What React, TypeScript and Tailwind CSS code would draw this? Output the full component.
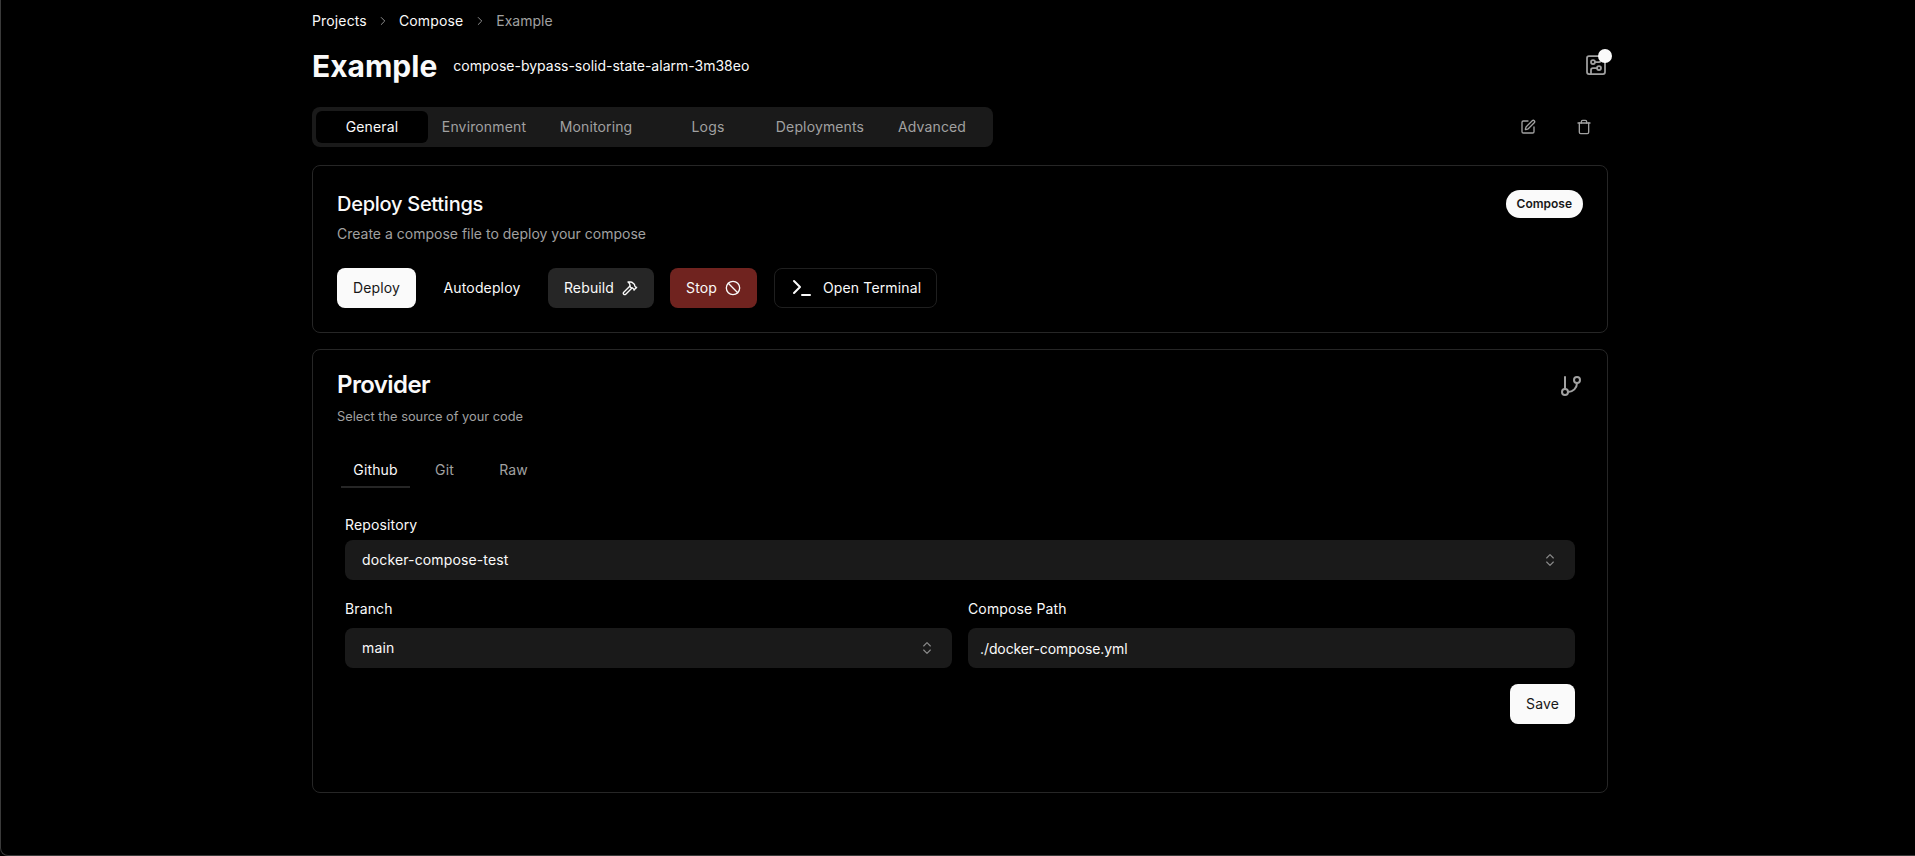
import { ChevronRight, CircuitBoard, SquarePen, Trash, Hammer, Ban, Terminal, ChevronsUpDown } from "lucide-react";

const tabs = ["General", "Environment", "Monitoring", "Logs", "Deployments", "Advanced"];

function SelectBox({ value }: { value: string }) {
  return (
    <div className="flex h-10 items-center justify-between rounded-lg bg-[#1a1a1a] pl-[17px] pr-[17px] text-[14px] tracking-[0.14px] text-[#fafafa]">
      <span className="pb-[1px]">{value}</span>
      <ChevronsUpDown className="size-4 text-[#8a8a8a]" strokeWidth={1.75} />
    </div>
  );
}

export default function App() {
  return (
    <div className="h-[856px] overflow-hidden bg-black">
      <div className="h-[856px] overflow-hidden rounded-bl-lg border-b border-l border-[#3a3a3a] bg-black font-['Inter',sans-serif] text-[#fafafa]">
        <div className="ml-[311px] w-[1296px]">
          <nav className="flex h-[41px] items-center text-[14px] tracking-[0.14px]">
            <span>Projects</span>
            <ChevronRight className="mx-[9px] size-[14px] text-[#a1a1a1]" strokeWidth={1.5} />
            <span>Compose</span>
            <ChevronRight className="mx-[9.5px] size-[14px] text-[#a1a1a1]" strokeWidth={1.5} />
            <span className="tracking-normal text-[#a1a1a1]">Example</span>
          </nav>
          <header className="mt-[4px] flex h-[40px] items-center justify-between">
            <div className="flex items-center gap-4">
              <h1 className="mt-[2px] text-[30px] leading-[36px] font-bold">Example</h1>
              <span className="text-[14px]">compose-bypass-solid-state-alarm-3m38eo</span>
            </div>
            <div className="relative size-6">
              <CircuitBoard className="size-6 text-[#a1a1a1]" strokeWidth={1.75} />
              <span className="absolute -top-1 -right-[4px] size-[14px] rounded-full bg-[#fafafa]" />
            </div>
          </header>
          <div className="mt-[22px] flex h-10 items-center justify-between">
            <div className="flex h-10 w-[681px] rounded-lg bg-[#1a1a1a] p-1 text-[14px] tracking-[0.14px]">
              {tabs.map((t, i) => (
                <div
                  key={t}
                  className={
                    i === 0
                      ? "flex h-8 w-[112px] items-center justify-center rounded-md bg-black pb-[1px] text-[#fafafa]"
                      : "flex h-8 w-[112px] items-center justify-center pb-[1px] text-[#a1a1a1]"
                  }
                >
                  {t}
                </div>
              ))}
            </div>
            <div className="mr-[16px] flex items-center gap-[40px] text-[#a1a1a1]">
              <SquarePen className="size-4" strokeWidth={2} />
              <Trash className="size-4" strokeWidth={2} />
            </div>
          </div>

          <section className="mt-[18px] h-[168px] rounded-lg border border-[#262626] p-6">
            <div className="flex items-start justify-between">
              <div>
                <h2 className="text-[20px] leading-[28px] font-medium tracking-[-0.27px]">Deploy Settings</h2>
                <p className="mt-[6px] text-[14px] leading-[20px] text-[#a1a1a1]">Create a compose file to deploy your compose</p>
              </div>
              <span className="rounded-full bg-[#fafafa] px-[11px] py-[6px] text-[12px] leading-[16px] font-semibold text-[#171717]">Compose</span>
            </div>
            <div className="mt-[24px] flex items-center text-[14px] tracking-[0.14px]">
              <button className="h-10 w-[79px] rounded-lg bg-[#fafafa] pb-[1px] text-[#171717]">Deploy</button>
              <button className="ml-[12px] h-10 w-[108px] rounded-lg pb-[1px] text-[#fafafa]">Autodeploy</button>
              <button className="ml-[12px] flex h-10 w-[106px] items-center justify-center gap-2 rounded-lg bg-[#262626]">
                <span className="pb-[1px]">Rebuild</span> <Hammer className="size-4" strokeWidth={2} />
              </button>
              <button className="ml-[16px] flex h-10 w-[87px] items-center justify-center gap-2 rounded-lg bg-[#70231f]">
                <span className="pb-[1px]">Stop</span> <Ban className="size-4" strokeWidth={2} />
              </button>
              <button className="ml-[17px] flex h-10 items-center gap-[9px] rounded-lg border border-[#1f1f1f] px-[15px]">
                <Terminal className="size-6" strokeWidth={2} /> <span className="pb-[1px]">Open Terminal</span>
              </button>
            </div>
          </section>

          <section className="mt-4 h-[444px] rounded-lg border border-[#262626] p-6">
            <div className="flex items-start justify-between">
              <div>
                <h2 className="-mt-[1px] text-[24px] leading-none font-semibold tracking-tight">Provider</h2>
                <p className="mt-[10px] text-[12.8px] leading-[20px] text-[#a1a1a1]">Select the source of your code</p>
              </div>
              <svg viewBox="0 0 24 24" fill="none" stroke="currentColor" strokeWidth="2" strokeLinecap="round" strokeLinejoin="round" className="size-6 text-[#a1a1a1]">
                <line x1="6" x2="6" y1="3" y2="15" />
                <circle cx="18" cy="6" r="3" />
                <circle cx="6" cy="18" r="3" />
                <path d="M18 9a9 9 0 0 1-9 9" />
              </svg>
            </div>
            <div className="mt-[28px] ml-[4px] flex h-[33px] items-start text-[14px] tracking-[0.14px]">
              <div className="h-[33px] w-[69px] border-b-2 border-[#262626] pt-[1px] text-center leading-[28px]">Github</div>
              <div className="w-[69px] pt-[1px] text-center leading-[28px] text-[#a1a1a1]">Git</div>
              <div className="w-[69px] pt-[1px] text-center leading-[28px] text-[#a1a1a1]">Raw</div>
            </div>
            <div className="mt-[27px] mx-2">
              <div className="text-[14px] leading-[20px] tracking-[0.14px]">Repository</div>
              <div className="mt-[5px]">
                <SelectBox value="docker-compose-test" />
              </div>
              <div className="mt-[19px] grid grid-cols-2 gap-4">
                <div>
                  <div className="text-[14px] leading-[20px] tracking-[0.14px]">Branch</div>
                  <div className="mt-[9px]">
                    <SelectBox value="main" />
                  </div>
                </div>
                <div>
                  <div className="text-[14px] leading-[20px] tracking-[0.14px]">Compose Path</div>
                  <div className="mt-[9px] flex h-10 items-center rounded-lg bg-[#1a1a1a] px-3 pt-[1px] text-[14px] tracking-[-0.1px] text-[#fafafa]">./docker-compose.yml</div>
                </div>
              </div>
              <div className="mt-4 flex justify-end">
                <button className="h-10 w-[65px] rounded-lg bg-[#fafafa] pb-[1px] text-[14px] tracking-[0.14px] text-[#171717]">Save</button>
              </div>
            </div>
          </section>
        </div>
      </div>
    </div>
  );
}
